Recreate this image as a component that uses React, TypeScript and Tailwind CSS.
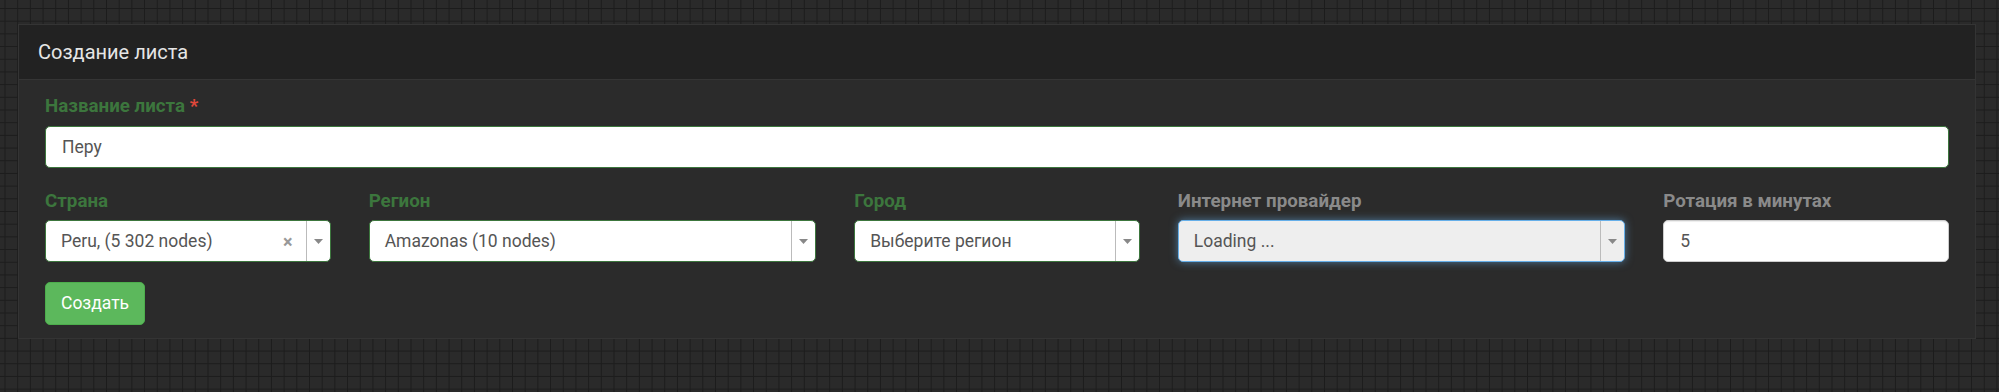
import React from 'react';

const font = { fontFamily: 'Roboto, "Noto Sans", sans-serif' };

function Arrow() {
  return (
    <div className="flex h-full w-[24px] items-center justify-center border-l border-[#bbbbbb]">
      <svg width="9" height="5" viewBox="0 0 9 5">
        <path d="M0 0 L9 0 L4.5 5 Z" fill="#888888" />
      </svg>
    </div>
  );
}

interface FieldProps {
  label: string;
  tone: 'success' | 'muted';
  width: string;
  children: React.ReactNode;
}

function Field({ label, tone, width, children }: FieldProps) {
  return (
    <div className={`${width} shrink-0 px-[19px]`}>
      <label
        className={`block h-[25px] text-[18.75px] font-bold leading-[25px] ${
          tone === 'success' ? 'text-[#3c763d]' : 'text-[#8a8a8a]'
        }`}
      >
        {label}
      </label>
      <div className="mt-[6px]">{children}</div>
    </div>
  );
}

function Select({ value, clear }: { value: string; clear?: boolean }) {
  return (
    <div className="flex h-[42px] items-center rounded-[5px] border border-[#3c763d] bg-white">
      <span className="flex-1 truncate pl-[15px] text-[17.5px] text-[#555555]">{value}</span>
      {clear && <span className="pr-[13px] text-[18px] font-bold text-[#999999]">×</span>}
      <Arrow />
    </div>
  );
}

export default function App() {
  return (
    <div
      style={font}
      className="h-[392px] w-full overflow-hidden bg-[#2a2a2a] bg-[linear-gradient(to_right,#1c1c1c_1px,transparent_1px),linear-gradient(to_bottom,#1c1c1c_1px,transparent_1px)] pt-[24px] pl-[18px] [background-position:4.5px_8px] [background-size:12.7px_12.7px]"
    >
      <div className="w-[1958px] border border-[#343434] bg-[#2b2b2b]">
        <div className="flex h-[55px] items-center border-b border-[#353535] bg-[#222222] px-[19px]">
          <h3 className="text-[20px] text-[#e6e6e6]">Создание листа</h3>
        </div>

        <div className="px-[26px] pt-[14px] pb-[13px]">
          <label className="block h-[25px] text-[18.75px] font-bold leading-[25px] text-[#3c763d]">
            Название листа <span className="text-[#e0483b]">*</span>
          </label>
          <div className="mt-[7px] flex h-[42px] items-center rounded-[5px] border border-[#3c763d] bg-white px-[16px] text-[17.5px] text-[#555555]">
            Перу
          </div>

          <div className="-mx-[19px] mt-[21px] flex">
            <Field label="Страна" tone="success" width="w-1/6">
              <Select value="Peru, (5 302 nodes)" clear />
            </Field>
            <Field label="Регион" tone="success" width="w-1/4">
              <Select value="Amazonas (10 nodes)" />
            </Field>
            <Field label="Город" tone="success" width="w-1/6">
              <Select value="Выберите регион" />
            </Field>
            <Field label="Интернет провайдер" tone="muted" width="w-1/4">
              <div className="flex h-[42px] items-center rounded-[5px] border border-[#66afe9] bg-[#eeeeee] shadow-[0_0_8px_rgba(102,175,233,0.6)]">
                <span className="flex-1 pl-[15px] text-[17.5px] text-[#555555]">Loading ...</span>
                <Arrow />
              </div>
            </Field>
            <Field label="Ротация в минутах" tone="muted" width="w-1/6">
              <div className="flex h-[42px] items-center rounded-[5px] border border-[#cccccc] bg-white px-[16px] text-[17.5px] text-[#555555] shadow-[inset_0_1px_1px_rgba(0,0,0,0.075)]">
                5
              </div>
            </Field>
          </div>

          <button className="mt-[20px] h-[43px] rounded-[5px] border border-[#4cae4c] bg-[#5cb85c] px-[15px] text-[17.5px] text-white">
            Создать
          </button>
        </div>
      </div>
    </div>
  );
}
